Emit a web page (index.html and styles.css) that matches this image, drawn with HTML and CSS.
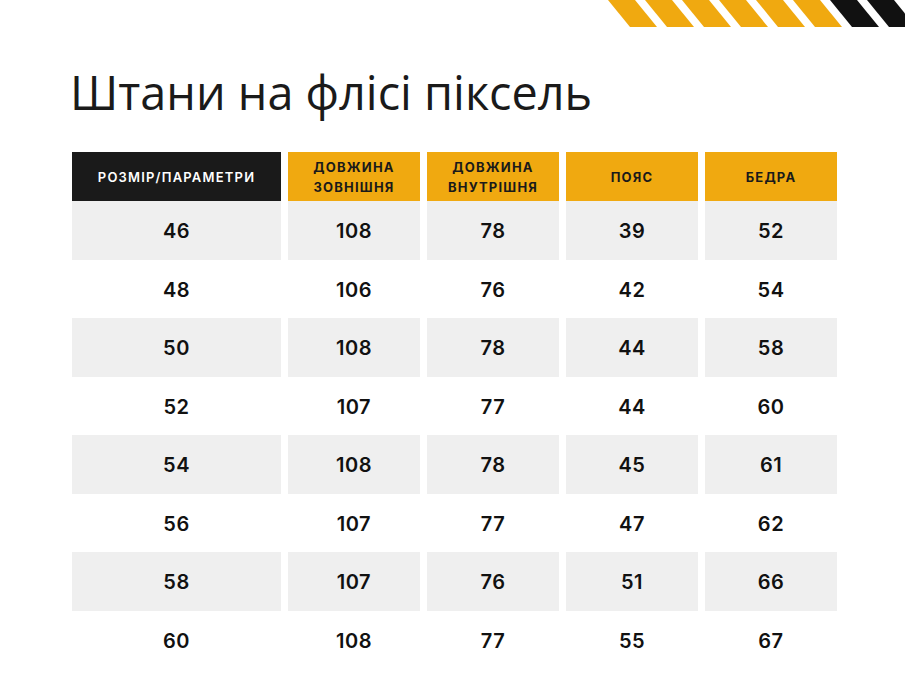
FILE: index.html
```html
<!DOCTYPE html>
<html lang="uk">
<head>
    <meta charset="UTF-8">
    <meta name="viewport" content="width=device-width, initial-scale=1.0">
    <title>Штани на флісі піксель</title>
    <link rel="stylesheet" href="styles.css">
</head>
<body>
    <div class="stripes">
        <svg width="300" height="27" viewBox="0 0 300 27" aria-hidden="true">
            <polygon points="3,0 30,0 52,27 25,27" fill="#f0a910"/>
            <polygon points="40,0 67,0 89,27 62,27" fill="#f0a910"/>
            <polygon points="77,0 104,0 126,27 99,27" fill="#f0a910"/>
            <polygon points="114,0 141,0 163,27 136,27" fill="#f0a910"/>
            <polygon points="151,0 178,0 200,27 173,27" fill="#f0a910"/>
            <polygon points="188,0 215,0 237,27 210,27" fill="#f0a910"/>
            <polygon points="225,0 252,0 274,27 247,27" fill="#111"/>
            <polygon points="262,0 289,0 311,27 284,27" fill="#111"/>
        </svg>
    </div>

    <main class="page">
        <h1>Штани на флісі піксель</h1>

        <div class="size-table">
            <div class="head dark">Розмір/параметри</div>
            <div class="head">Довжина<br>зовнішня</div>
            <div class="head">Довжина<br>внутрішня</div>
            <div class="head">Пояс</div>
            <div class="head">Бедра</div>

            <div class="cell grey">46</div><div class="cell grey">108</div><div class="cell grey">78</div><div class="cell grey">39</div><div class="cell grey">52</div>
            <div class="cell">48</div><div class="cell">106</div><div class="cell">76</div><div class="cell">42</div><div class="cell">54</div>
            <div class="cell grey">50</div><div class="cell grey">108</div><div class="cell grey">78</div><div class="cell grey">44</div><div class="cell grey">58</div>
            <div class="cell">52</div><div class="cell">107</div><div class="cell">77</div><div class="cell">44</div><div class="cell">60</div>
            <div class="cell grey">54</div><div class="cell grey">108</div><div class="cell grey">78</div><div class="cell grey">45</div><div class="cell grey">61</div>
            <div class="cell">56</div><div class="cell">107</div><div class="cell">77</div><div class="cell">47</div><div class="cell">62</div>
            <div class="cell grey">58</div><div class="cell grey">107</div><div class="cell grey">76</div><div class="cell grey">51</div><div class="cell grey">66</div>
            <div class="cell">60</div><div class="cell">108</div><div class="cell">77</div><div class="cell">55</div><div class="cell">67</div>
        </div>
    </main>
</body>
</html>
```

FILE: styles.css
```css
body {
    margin: 0;
    padding: 0;
    background-color: #fff;
    color: #111;
    font-family: Inter, "Noto Sans", sans-serif;
}
.stripes {
    display: flex;
    justify-content: flex-end;
    height: 27px;
}
.stripes svg {
    display: block;
}
.page {
    padding: 0 68px 0 72px;
}
h1 {
    font-family: "Open Sans", "Noto Sans", sans-serif;
    font-weight: 400;
    font-size: 46.8px;
    line-height: 58px;
    color: #1a1a1a;
    margin: 36px 0 31px -2px;
}
.size-table {
    display: grid;
    grid-template-columns: 209px repeat(4, 132px);
    grid-template-rows: 49px;
    grid-auto-rows: 58.5px;
    column-gap: 7px;
}
.head {
    display: flex;
    align-items: center;
    justify-content: center;
    text-align: center;
    background-color: #f0a910;
    color: #1a1a1a;
    font-size: 13px;
    font-weight: 700;
    line-height: 20px;
    letter-spacing: 1.2px;
    text-transform: uppercase;
}
.head.dark {
    background-color: #1a1a1a;
    color: #fff;
    font-weight: 600;
}
.cell {
    display: flex;
    align-items: center;
    justify-content: center;
    padding-top: 2px;
    font-size: 20px;
    font-weight: 600;
    letter-spacing: 0.5px;
}
.cell.grey {
    background-color: #efefef;
}
```
